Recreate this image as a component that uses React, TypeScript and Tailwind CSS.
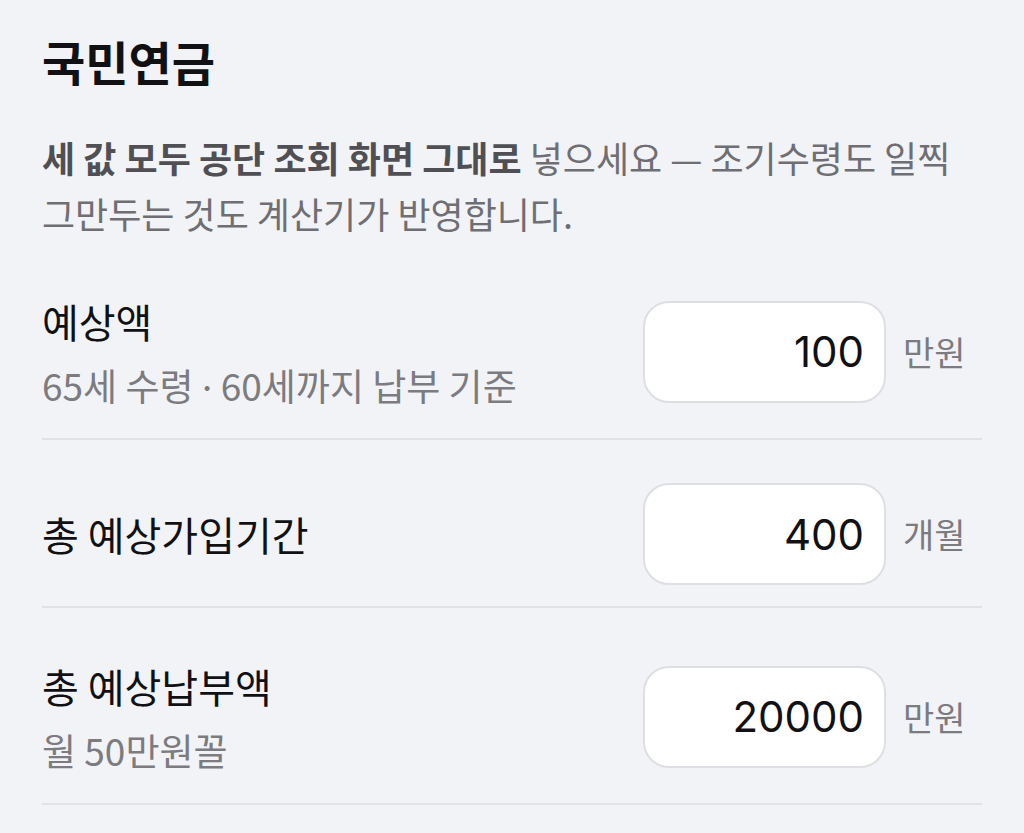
import React from 'react';

const KR = "font-['Noto_Sans_CJK_KR',sans-serif]";

interface FieldRowProps {
  label: string;
  hint?: React.ReactNode;
  value: string;
  unit: string;
}

function FieldRow({ label, hint, value, unit }: FieldRowProps) {
  return (
    <div className="flex items-center justify-between border-b-2 border-[#e1e2e6] pt-[43px] pb-[21px] pr-[15px]">
      {hint ? (
        <div className="flex h-[131px] flex-col pt-[10px]">
          <div className="text-[40px] leading-[50px] text-[#111113]">{label}</div>
          <div className="mt-[16px] text-[37px] leading-[46px] text-[#7b7b80]">{hint}</div>
        </div>
      ) : (
        <div className="text-[40px] leading-[50px] text-[#111113]">{label}</div>
      )}
      <div className="flex items-center gap-[17px]">
        <input
          type="text"
          inputMode="numeric"
          defaultValue={value}
          className="h-[102px] w-[243px] rounded-[26px] border-2 border-[#dedfe2] bg-white pr-[20px] text-right font-['Inter',sans-serif] text-[42px] text-[#111113] outline-none"
        />
        <span className="w-[64px] whitespace-nowrap text-[34px] leading-[40px] text-[#7b7b80]">{unit}</span>
      </div>
    </div>
  );
}

export default function App() {
  return (
    <div className={`min-h-screen bg-[#f2f3f7] px-[42px] pt-[33px] ${KR}`}>
      <h1 className="text-[47px] font-bold leading-[56px] text-[#111113]">국민연금</h1>
      <p className="mt-[40px] mb-[2px] text-[36px] leading-[56px] text-[#6e6e73]">
        <span className="font-semibold text-[#4f4f54]">세 값 모두 공단 조회 화면 그대로</span> 넣으세요 — 조기수령도 일찍
        그만두는 것도 계산기가 반영합니다.
      </p>

      <FieldRow
        label="예상액"
        hint={
          <>
            65세 수령 <span className="font-['Inter',sans-serif]">·</span> 60세까지 납부 기준
          </>
        }
        value="100"
        unit="만원"
      />
      <FieldRow label="총 예상가입기간" value="400" unit="개월" />
      <FieldRow label="총 예상납부액" hint="월 50만원꼴" value="20000" unit="만원" />
    </div>
  );
}
